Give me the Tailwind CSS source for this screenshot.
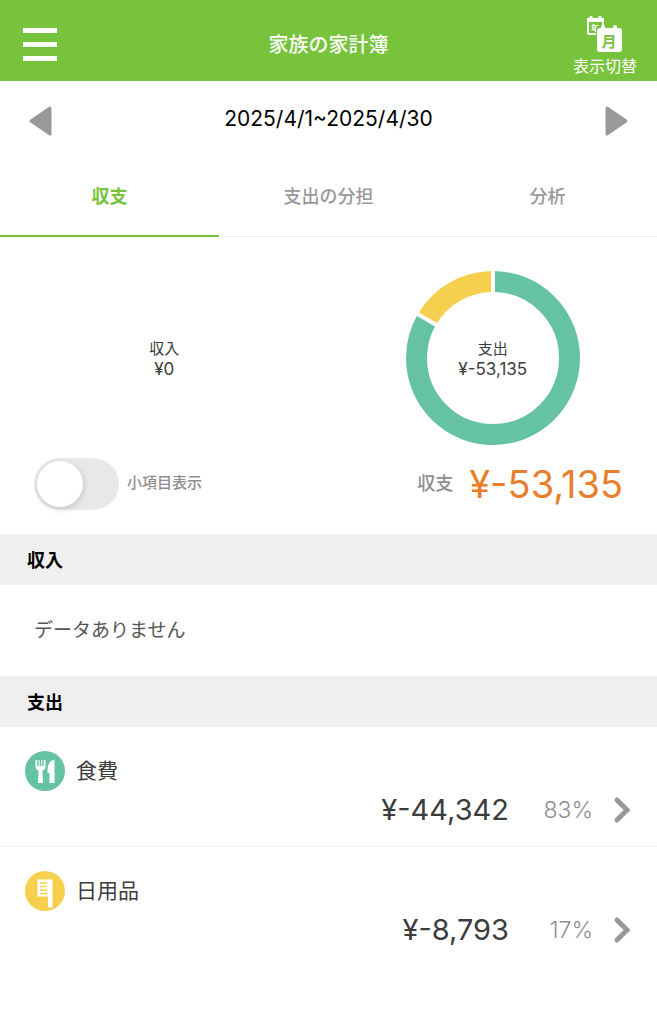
<!DOCTYPE html>
<html lang="ja">
<head>
    <meta charset="utf-8"/>
    <meta content="width=device-width, initial-scale=1.0" name="viewport"/>
    <title>家族の家計簿</title>
    <script src="https://cdn.jsdelivr.net/npm/@tailwindcss/browser@4"></script>
</head>
<body class="bg-white text-[#3c3c3c] font-['Inter','Noto_Sans_CJK_JP',sans-serif] antialiased">
    <!-- Header -->
    <header class="grid grid-cols-[1fr_auto_1fr] items-center h-[81px] px-5 bg-[#77c33b] text-white">
        <button type="button" aria-label="メニュー" class="flex flex-col gap-[9px] w-10 px-[3px] pt-4 pb-2">
            <span class="block w-full h-[5px] bg-white"></span>
            <span class="block w-full h-[5px] bg-white"></span>
            <span class="block w-full h-[5px] bg-white"></span>
        </button>
        <h1 class="mt-2 text-[20px] leading-6 font-medium">家族の家計簿</h1>
        <button type="button" class="justify-self-end flex flex-col items-center pt-3 text-[16px] leading-6">
            <svg class="w-9 h-[38px]" viewBox="0 0 36 38" aria-hidden="true">
                <rect x="1" y="3" width="15" height="15" rx="1" fill="none" stroke="#fff" stroke-width="2"/>
                <path d="M0 2H17V6H0Z" fill="#fff"/>
                <path d="M4 1V4M13 1V4" stroke="#fff" stroke-width="3" stroke-linecap="round"/>
                <text x="8" y="15" font-size="8" font-weight="900" text-anchor="middle" fill="#fff">年</text>
                <rect x="9" y="10" width="27" height="28" rx="3" fill="#77c33b"/>
                <rect x="10" y="12" width="25" height="24" rx="3" fill="#fff"/>
                <path d="M16 11V14M28 11V14" stroke="#fff" stroke-width="4" stroke-linecap="round"/>
                <text x="22" y="31" font-size="15" font-weight="700" text-anchor="middle" fill="#77c33b">月</text>
            </svg>
            <span>表示切替</span>
        </button>
    </header>

    <!-- Month navigation -->
    <div class="flex items-center justify-between h-[75px] px-7 pt-1">
        <button type="button" aria-label="前の月">
            <svg class="w-6 h-8" viewBox="0 0 24 32"><path d="M3 16L22 3V29Z" fill="#999" stroke="#999" stroke-width="3" stroke-linejoin="round"/></svg>
        </button>
        <p class="text-[21px] leading-8 pb-1 text-black">2025/4/1~2025/4/30</p>
        <button type="button" aria-label="次の月">
            <svg class="w-6 h-8" viewBox="0 0 24 32"><path d="M21 16L2 3V29Z" fill="#999" stroke="#999" stroke-width="3" stroke-linejoin="round"/></svg>
        </button>
    </div>

    <!-- Tabs -->
    <nav class="grid grid-cols-3 text-center text-[18px] leading-[81px] font-medium text-[#999]">
        <a href="#" class="h-[81px] border-b-2 border-[#77c33b] font-bold text-[#77c33b]">収支</a>
        <a href="#" class="h-[81px] border-b border-[#eee]">支出の分担</a>
        <a href="#" class="h-[81px] border-b border-[#eee]">分析</a>
    </nav>

    <main>
        <!-- Charts -->
        <div class="grid grid-cols-2 pt-[34px] leading-5 text-center">
            <div class="flex flex-col justify-center pt-[2px]">
                <span class="text-[15px]">収入</span>
                <span class="text-[17px]">¥0</span>
            </div>
            <div class="grid place-items-center">
                <svg class="col-start-1 row-start-1 w-[174px] h-[174px]" viewBox="0 0 174 174" fill="none" aria-hidden="true">
                    <g stroke-width="21" transform="rotate(-90 87 87)">
                        <circle cx="87" cy="87" r="76.500" stroke="#66c2a5" pathLength="1000" stroke-dasharray="834 166"/>
                        <circle cx="87" cy="87" r="76.500" stroke="#f5d04f" pathLength="1000" stroke-dasharray="166 834" stroke-dashoffset="-834"/>
                    </g>
                    <path d="M87 87V-3M87 87L9 41.500" stroke="#fff" stroke-width="4"/>
                </svg>
                <div class="col-start-1 row-start-1 flex flex-col pt-[2px]">
                    <span class="text-[15px]">支出</span>
                    <span class="text-[17px]">¥-53,135</span>
                </div>
            </div>
        </div>

        <div class="flex items-center justify-between h-[89px] px-[34px] pb-3 text-[#8e8e8e] font-medium">
            <label class="flex items-center gap-2 text-[15px]">
                <input type="checkbox" class="appearance-none w-[85px] h-[52px] p-[3px] rounded-full bg-[#e8e8e8] before:block before:size-[46px] before:rounded-full before:bg-white before:shadow-[1px_2px_6px_rgba(0,0,0,0.15)] checked:bg-[#77c33b] checked:before:ml-[33px]"/>
                小項目表示
            </label>
            <p class="flex items-center gap-4 text-[18px]">
                収支
                <span class="text-[38px] leading-[52px] font-normal text-[#e87f2c]">¥-53,135</span>
            </p>
        </div>

        <!-- Income -->
        <h2 class="h-[51px] px-[27px] pt-px bg-[#efefef] text-[18px] leading-[51px] font-bold text-black">収入</h2>
        <p class="px-[34px] text-[19px] leading-[91px] text-[#555]">データありません</p>

        <!-- Expenses -->
        <h2 class="h-[51px] px-[27px] pt-px bg-[#efefef] text-[18px] leading-[51px] font-bold text-black">支出</h2>
        <ul>
            <li class="border-b border-[#f0f0f0]">
                <a href="#" class="block h-[119px] pl-[25px] pr-[26px] pt-6">
                    <div class="flex items-center gap-[11px] text-[21px] leading-10">
                        <svg class="w-10 h-10" viewBox="0 0 40 40" aria-hidden="true">
                            <circle cx="20" cy="20" r="20" fill="#66c2a5"/>
                            <path d="M10.500 9V15Q10.500 19 13.500 19.500L13 32H18L17.500 19.500Q20.500 19 20.500 15V9H18.700V15H17.300V9H16.300V15H14.700V9H13.700V15H12.300V9Z" fill="#fff"/>
                            <path d="M29.500 9V32H24.500V22H22.500V18Q23.500 9 29.500 9Z" fill="#fff"/>
                        </svg>
                        食費
                    </div>
                    <div class="flex items-center justify-end leading-[38px]">
                        <span class="text-[29px]">¥-44,342</span>
                        <span class="w-[84px] text-right text-[23px] font-light text-[#8e8e8e]">83%</span>
                        <svg class="w-[18px] h-7 ml-5" viewBox="0 0 18 28" aria-hidden="true"><path d="M4 4L14 14L4 24" fill="none" stroke="#999" stroke-width="5" stroke-linecap="round"/></svg>
                    </div>
                </a>
            </li>
            <li>
                <a href="#" class="block h-[119px] pl-[25px] pr-[26px] pt-6">
                    <div class="flex items-center gap-[11px] text-[21px] leading-10">
                        <svg class="w-10 h-10" viewBox="0 0 40 40" aria-hidden="true">
                            <circle cx="20" cy="20" r="20" fill="#f5d04f"/>
                            <path d="M12.500 8.500H27.500V36.500H23V25.500H12.500Z" fill="#fff"/>
                            <path d="M15 12H22M15 15.500H22M15 19H22M15 22.500H22" stroke="#f5d04f" stroke-width="1.500"/>
                        </svg>
                        日用品
                    </div>
                    <div class="flex items-center justify-end leading-[38px]">
                        <span class="text-[29px]">¥-8,793</span>
                        <span class="w-[84px] text-right text-[23px] font-light text-[#8e8e8e]">17%</span>
                        <svg class="w-[18px] h-7 ml-5" viewBox="0 0 18 28" aria-hidden="true"><path d="M4 4L14 14L4 24" fill="none" stroke="#999" stroke-width="5" stroke-linecap="round"/></svg>
                    </div>
                </a>
            </li>
        </ul>
    </main>
</body>
</html>
